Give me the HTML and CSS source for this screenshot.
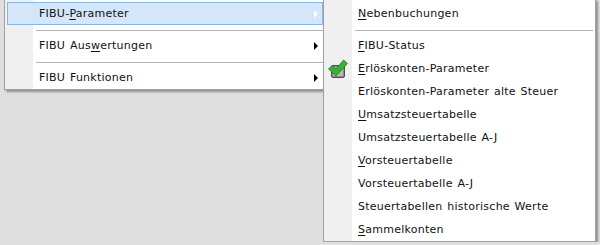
FILE: index.html
```html
<!DOCTYPE html>
<html lang="de">
<head>
    <meta charset="UTF-8">
    <meta name="viewport" content="width=device-width, initial-scale=1.0">
    <title>FIBU Menü</title>
    <link rel="stylesheet" href="styles.css">
</head>
<body>
    <div class="desk">
        <div class="menu main">
            <div class="item active"><span class="label">FIBU-<u>P</u>arameter</span><span class="arrow"></span></div>
            <div class="sep"></div>
            <div class="item"><span class="label">FIBU Aus<u>w</u>ertungen</span><span class="arrow"></span></div>
            <div class="sep"></div>
            <div class="item"><span class="label">FIBU Funktionen</span><span class="arrow"></span></div>
        </div>

        <div class="menu sub">
            <div class="item"><span class="label"><u>N</u>ebenbuchungen</span></div>
            <div class="sep"></div>
            <div class="item"><span class="label"><u>F</u>IBU-Status</span></div>
            <div class="item checked">
                <svg class="check" width="20" height="20" viewBox="0 0 20 20">
                    <rect x="3.5" y="6.5" width="13" height="12" rx="1.5" fill="#8a8a8a" stroke="#4e4e4e"/>
                    <rect x="5" y="8" width="10" height="9" fill="#b8b8b8"/>
                    <path d="M0.5 10 L4 6.5 L8 10 L15.5 1 L19.5 4.5 L8 17 Z" fill="#36b236" stroke="#1c7a1c" stroke-width="0.8" stroke-linejoin="round"/>
                </svg>
                <span class="label"><u>E</u>rlöskonten-Parameter</span>
            </div>
            <div class="item"><span class="label">Erlöskonten-Parameter alte Steuer</span></div>
            <div class="item"><span class="label"><u>U</u>msatzsteuertabelle</span></div>
            <div class="item"><span class="label">Umsatzsteuertabelle A-J</span></div>
            <div class="item"><span class="label"><u>V</u>orsteuertabelle</span></div>
            <div class="item"><span class="label">Vorsteuertabelle A-J</span></div>
            <div class="item"><span class="label">Steuertabellen historische Werte</span></div>
            <div class="item"><span class="label"><u>S</u>ammelkonten</span></div>
        </div>
    </div>
</body>
</html>
```

FILE: styles.css
```css
body {
    margin: 0;
    background-color: #dfdfdf;
    font-family: "DejaVu Sans", Verdana, sans-serif;
    font-size: 11px;
    letter-spacing: 0.25px;
    word-spacing: 1px;
    color: #111;
}
.desk {
    display: flex;
    align-items: flex-start;
    margin-top: -1px;
}
.menu {
    background: linear-gradient(to right, #f0f0f0 28px, #fff 28px);
    border: 1px solid #a0a0a0;
    padding: 2px 2px 0;
    box-shadow: 2px 2px 2px rgba(0, 0, 0, 0.35);
}
.main {
    margin-left: 4px;
    width: 316px;
}
.sub {
    margin-left: -3px;
    width: 267px;
    position: relative;
}
.item {
    height: 23px;
    box-sizing: border-box;
    border: 1px solid transparent;
    padding-left: 31px;
    display: flex;
    align-items: center;
}
.item .label {
    flex: 1;
    white-space: nowrap;
}
.item u {
    text-underline-offset: 2px;
}
.item.active {
    background-color: #d5e6f8;
    border-color: #84b7e8;
}
.arrow {
    width: 0;
    height: 0;
    border-left: 4px solid #000;
    border-top: 4px solid transparent;
    border-bottom: 4px solid transparent;
    margin-right: 4px;
}
.item.active .arrow {
    border-left-color: #fff;
}
.sep {
    height: 1px;
    margin: 5px 0 3px 29px;
    background-color: #b4b4b4;
}
.check {
    margin-left: -30px;
    margin-right: 10px;
    flex: none;
}
```
